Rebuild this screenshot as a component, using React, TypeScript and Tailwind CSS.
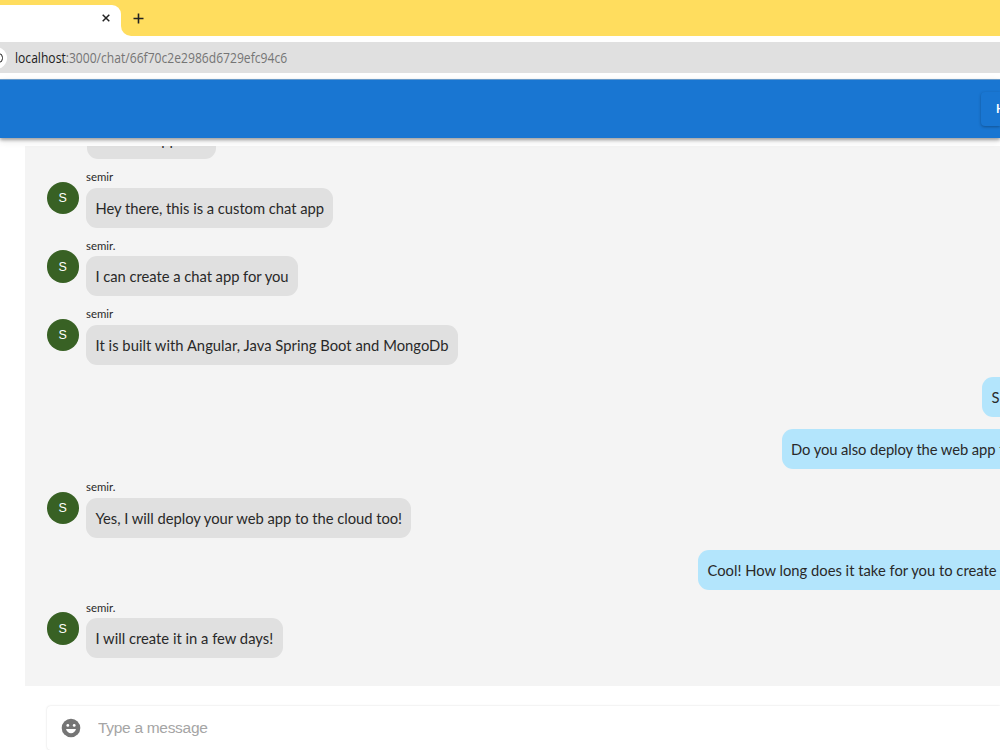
import { useState } from "react";

type Message = {
  id: number;
  own?: boolean;
  name?: string;
  text: string;
  width: string;
};

const messages: Message[] = [
  { id: 1, name: "semir", text: "Hey there, this is a custom chat app", width: "w-[247px] tracking-[-0.03px]" },
  { id: 2, name: "semir.", text: "I can create a chat app for you", width: "w-[212px] tracking-[-0.04px]" },
  { id: 3, name: "semir", text: "It is built with Angular, Java Spring Boot and MongoDb", width: "w-[371.5px] tracking-[0.03px]" },
  { id: 4, own: true, text: "S", width: "w-[18px]" },
  { id: 5, own: true, text: "Do you also deploy the web app t", width: "w-[218.5px] tracking-[-0.08px]" },
  { id: 6, name: "semir.", text: "Yes, I will deploy your web app to the cloud too!", width: "w-[325px] tracking-[-0.03px]" },
  { id: 7, own: true, text: "Cool! How long does it take for you to create", width: "w-[302px]" },
  { id: 8, name: "semir.", text: "I will create it in a few days!", width: "w-[197px]" },
];

function BrowserBar() {
  return (
    <div className="h-[79px] shrink-0 bg-white">
      <div className="flex h-9 bg-white">
        <div className="w-[121px] bg-[#ffdd5e] pt-[5px]">
          <div className="flex h-full items-center justify-end rounded-tr-[9px] bg-white pr-[11.5px] pb-[4.5px]">
            <svg width="8" height="8" viewBox="0 0 8 8" stroke="#222" strokeWidth="1.5">
              <path d="M0.7 0.7l6.6 6.6M7.3 0.7L0.7 7.3" />
            </svg>
          </div>
        </div>
        <div className="flex-1 rounded-bl-[10px] bg-[#ffdd5e] pt-[13px] pl-[12px]">
          <svg width="11" height="11" viewBox="0 0 11 11" stroke="#222" strokeWidth="1.6">
            <path d="M5.5 0.5v10M0.5 5.5h10" />
          </svg>
        </div>
      </div>
      <div className="mt-[6px] flex h-[31px] items-center overflow-hidden bg-[#e0e0e0]">
        <div className="-ml-[15px] flex size-[22px] shrink-0 items-center justify-end rounded-full bg-white pr-[4px]">
          <div className="h-[10px] w-[9px] rounded-full border-[1.5px] border-[#222]" />
        </div>
        <span className="mt-[1px] ml-[8px] origin-left scale-x-[0.865] font-['Open_Sans',sans-serif] text-[14px] leading-none whitespace-nowrap text-[#757575]">
          <span className="text-[#222]">localhost</span>:3000/chat/66f70c2e2986d6729efc94c6
        </span>
      </div>
    </div>
  );
}

function MessageRow({ message }: { message: Message }) {
  if (message.own) {
    return (
      <div className="flex justify-end">
        <div className={`${message.width} flex h-10 items-center overflow-hidden rounded-l-[11px] bg-[#b3e5fc] pl-[9.5px] text-[14.75px] whitespace-nowrap`}>
          {message.text}
        </div>
      </div>
    );
  }

  return (
    <div className="flex gap-[7px]">
      <div className="mt-[10.5px] flex size-[32.5px] shrink-0 items-center justify-center rounded-full bg-[#386124] pt-px font-['Liberation_Sans',sans-serif] text-[12.5px] text-white">
        S
      </div>
      <div>
        <div className="h-[16.6px] text-[11.4px] leading-[11px] whitespace-nowrap">{message.name}</div>
        <div className={`${message.width} flex h-10 items-center rounded-[11px] bg-[#e0e0e0] pl-[9.5px] text-[14.75px] whitespace-nowrap`}>
          {message.text}
        </div>
      </div>
    </div>
  );
}

export default function App() {
  const [draft, setDraft] = useState("");

  return (
    <div className="flex h-[750px] w-[1000px] flex-col overflow-hidden bg-white font-['Lato',sans-serif] text-[#292929]">
      <BrowserBar />

      <header className="z-10 flex h-[59px] shrink-0 items-center justify-end border-t border-[#6a9bc9] bg-[#1976d2] shadow-[0_2px_3px_rgba(0,0,0,0.3),0_3px_7px_rgba(0,0,0,0.12)]">
        <button className="h-[34px] w-[19px] overflow-hidden rounded-l-[4px] bg-[#1976d2] pl-[15px] text-left font-['Roboto',sans-serif] text-[13px] font-medium text-white shadow-[0_1px_3px_rgba(0,0,0,0.3)]">
          H
        </button>
      </header>

      <main className="mt-[7.5px] ml-[25px] flex h-[540px] shrink-0 flex-col overflow-hidden bg-[#f4f4f4]">
        {/* last scrolled message, only the bottom is visible */}
        <div className="ml-[61.5px] flex h-[13px] w-[129.5px] shrink-0 items-end overflow-hidden rounded-b-[11px] bg-[#e0e0e0]">
          <div className="flex h-10 shrink-0 items-center pt-px pl-[67.5px] text-[14.75px]">app</div>
        </div>
        <div className="mt-[12.6px] ml-[21.5px] flex flex-col gap-[12.04px]">
          {messages.map((message) => (
            <MessageRow key={message.id} message={message} />
          ))}
        </div>
      </main>

      <div className="mt-[20.5px] ml-[47px] flex h-[43.5px] shrink-0 items-center rounded-l-[4px] bg-white pl-[14px] shadow-[0_0_2px_rgba(0,0,0,0.17)]">
        <svg className="size-[20px]" viewBox="0 0 20 20">
          <circle cx="10" cy="10" r="9.3" fill="#757575" />
          <circle cx="6.8" cy="7.4" r="1.4" fill="#fff" />
          <circle cx="13.2" cy="7.4" r="1.4" fill="#fff" />
          <path d="M5 11h10c-.7 2.4-2.6 4.2-5 4.2S5.700 13.400 5 11z" fill="#fff" />
        </svg>
        <input
          value={draft}
          onChange={(e) => setDraft(e.target.value)}
          placeholder="Type a message"
          className="mb-px ml-[17px] flex-1 font-['Liberation_Sans',sans-serif] text-[15.5px] tracking-[-0.3px] outline-none placeholder:text-[#a5a5a5]"
        />
      </div>
    </div>
  );
}
